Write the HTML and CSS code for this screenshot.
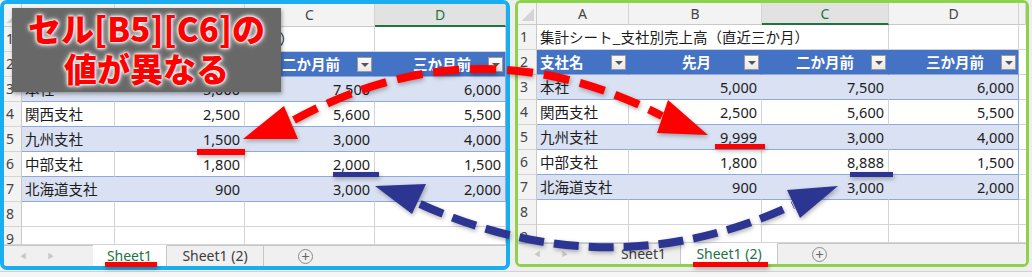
FILE: index.html
```html
<!DOCTYPE html>
<html lang="ja">
<head>
<meta charset="utf-8">
<title>シート比較</title>
<link rel="stylesheet" href="styles.css">
</head>
<body>
<div class="page">
  <div class="win win--l">
    <div class="grid grid--l">
      <div class="corner"></div><div class="ch">A</div><div class="ch">B</div><div class="ch">C</div><div class="ch ch--sel">D</div>
      <div class="rh">1</div><div class="c c--title">集計シート_支社別売上高（直近三か月）</div><div class="c"></div>
      <div class="rh">2</div><div class="c th th--a"><span>支社名</span><i class="fb"></i></div><div class="c th th--b"><span>先月</span><i class="fb"></i></div><div class="c th"><span>二か月前</span><i class="fb"></i></div><div class="c th th--last"><span>三か月前</span><i class="fb"></i></div>
      <div class="rh">3</div><div class="c t band">本社</div><div class="c t band n">5,000</div><div class="c t band n">7,500</div><div class="c t band n last">6,000</div>
      <div class="rh">4</div><div class="c t">関西支社</div><div class="c t n">2,500</div><div class="c t n">5,600</div><div class="c t n last">5,500</div>
      <div class="rh">5</div><div class="c t band">九州支社</div><div class="c t band n">1,500</div><div class="c t band n">3,000</div><div class="c t band n last">4,000</div>
      <div class="rh">6</div><div class="c t">中部支社</div><div class="c t n">1,800</div><div class="c t n">2,000</div><div class="c t n last">1,500</div>
      <div class="rh">7</div><div class="c t band">北海道支社</div><div class="c t band n">900</div><div class="c t band n">3,000</div><div class="c t band n last">2,000</div>
      <div class="rh">8</div><div class="c"></div><div class="c"></div><div class="c"></div><div class="c"></div>
      <div class="rh">9</div><div class="c"></div><div class="c"></div><div class="c"></div><div class="c"></div>
    </div>
    <div class="tabs">
      <div class="tabs__nav"><span>◀</span><span>▶</span></div>
      <div class="tab tab--active">Sheet1</div>
      <div class="tab tab--wide">Sheet1 (2)</div>
      <div class="tabs__rest"><span class="plus">+</span></div>
    </div>
  </div>

  <div class="win win--r">
    <div class="grid grid--r">
      <div class="corner"></div><div class="ch">A</div><div class="ch">B</div><div class="ch ch--sel">C</div><div class="ch">D</div><div class="ch"></div>
      <div class="rh">1</div><div class="c c--title">集計シート_支社別売上高（直近三か月）</div><div class="c"></div><div class="c"></div>
      <div class="rh">2</div><div class="c th th--a"><span>支社名</span><i class="fb"></i></div><div class="c th th--b"><span>先月</span><i class="fb"></i></div><div class="c th"><span>二か月前</span><i class="fb"></i></div><div class="c th th--last"><span>三か月前</span><i class="fb"></i></div><div class="c"></div>
      <div class="rh">3</div><div class="c t band">本社</div><div class="c t band n">5,000</div><div class="c t band n">7,500</div><div class="c t band n last">6,000</div><div class="c"></div>
      <div class="rh">4</div><div class="c t">関西支社</div><div class="c t n">2,500</div><div class="c t n">5,600</div><div class="c t n last">5,500</div><div class="c"></div>
      <div class="rh">5</div><div class="c t band">九州支社</div><div class="c t band n">9,999</div><div class="c t band n">3,000</div><div class="c t band n last">4,000</div><div class="c"></div>
      <div class="rh">6</div><div class="c t">中部支社</div><div class="c t n">1,800</div><div class="c t n">8,888</div><div class="c t n last">1,500</div><div class="c"></div>
      <div class="rh">7</div><div class="c t band">北海道支社</div><div class="c t band n">900</div><div class="c t band n">3,000</div><div class="c t band n last">2,000</div><div class="c"></div>
      <div class="rh">8</div><div class="c"></div><div class="c"></div><div class="c"></div><div class="c"></div><div class="c"></div>
      <div class="rh">9</div><div class="c"></div><div class="c"></div><div class="c"></div><div class="c"></div><div class="c"></div>
    </div>
    <div class="tabs">
      <div class="tabs__nav"><span>◀</span><span>▶</span></div>
      <div class="tab">Sheet1</div>
      <div class="tab tab--wide tab--active">Sheet1 (2)</div>
      <div class="tabs__rest"><span class="plus">+</span></div>
    </div>
  </div>

  <div class="label">セル[B5][C6]の<br>値が異なる</div>

  <svg class="arrows" width="1032" height="277" viewBox="0 0 1032 277">
    <g class="arrows__red">
      <path d="M 294 120 Q 478 20 662 116" fill="none" stroke="#ff0000" stroke-width="8" stroke-dasharray="26 11"/>
      <polygon points="243,139 284,106 298,139" fill="#ff0000"/>
      <polygon points="708,135 668,100 657,133" fill="#ff0000"/>
      <rect x="197" y="149" width="48" height="6" fill="#ff0000"/>
      <rect x="105" y="262" width="52" height="5" fill="#ff0000"/>
      <rect x="715" y="144" width="50" height="5" fill="#ff0000"/>
      <rect x="693" y="262" width="75" height="5" fill="#ff0000"/>
    </g>
    <g class="arrows__blue">
      <path d="M 420 204 Q 610 290 793 205" fill="none" stroke="#2d3592" stroke-width="8" stroke-dasharray="25 10"/>
      <polygon points="375,186 426,184 412,214" fill="#2d3592"/>
      <polygon points="838,186 787,190 800,218" fill="#2d3592"/>
      <rect x="333" y="172" width="46" height="5" fill="#2d3592"/>
      <rect x="850" y="172" width="43" height="5" fill="#2d3592"/>
    </g>
  </svg>
</div>
</body>
</html>
```

FILE: styles.css
```css
* {
  box-sizing: border-box;
  margin: 0;
  padding: 0;
}

body {
  margin: 0;
  width: 1032px;
  height: 277px;
  overflow: hidden;
  background: #f0f0f0;
  font-family: "Noto Sans CJK JP", "Noto Sans", sans-serif;
}

.page {
  position: relative;
  width: 1032px;
  height: 277px;
  display: flex;
  gap: 5px;
  align-items: flex-start;
  background: linear-gradient(to bottom, #eeeeee 0 271px, #d2d2d2 271px 272px, #f6f6f6 272px);
}

.win {
  background: #fff;
  display: flex;
  flex-direction: column;
  overflow: hidden;
}

.win--l {
  width: 510px;
  height: 270px;
  border: 4px solid #18aef0;
  border-radius: 7px;
}

.win--r {
  width: 514px;
  height: 267px;
  border: 3px solid #8ed14a;
  border-radius: 6px;
}

.grid {
  display: grid;
  font-size: 14.5px;
  color: #1c1c1c;
  flex: none;
}

.grid--l {
  grid-template-columns: 18px 93px 130px 130px 131px;
  grid-template-rows: 23px repeat(8, 25px) 18px;
}

.grid--r {
  grid-template-columns: 19px 92px 133px 127px 130px 7px;
  grid-template-rows: 22px repeat(8, 25px) 18px;
}

.corner {
  background: linear-gradient(135deg, transparent 50%, #d4d4d4 50%) no-repeat right 2px bottom 3px / 12px 12px, #f3f3f3;
  border-right: 1px solid #c9c9c9;
  border-bottom: 1px solid #c9c9c9;
}

.ch {
  background: #f3f3f3;
  border-right: 1px solid #d4d4d4;
  border-bottom: 1px solid #c9c9c9;
  color: #444;
  font-family: "Noto Sans", sans-serif;
  font-size: 14px;
  text-align: center;
  line-height: 21px;
}

.ch--sel {
  background: #e2e2e2;
  border-bottom: 2px solid #217346;
  color: #217346;
}

.rh {
  background: #f3f3f3;
  border-right: 1px solid #c9c9c9;
  border-bottom: 1px solid #d4d4d4;
  color: #444;
  font-family: "Noto Sans", sans-serif;
  font-size: 14px;
  padding-left: 2px;
  line-height: 24px;
  overflow: hidden;
}

.c {
  border-right: 1px solid #d4d4d4;
  border-bottom: 1px solid #d4d4d4;
  line-height: 24px;
  padding: 0 4px 0 3px;
  white-space: nowrap;
  overflow: visible;
  min-width: 0;
}

.c--title {
  grid-column: span 3;
}

.t {
  border-bottom-color: #8ea9db;
}

.band {
  background: #d9e1f2;
  border-right-color: #d9e1f2;
}

.n {
  text-align: right;
  padding-right: 4px;
  font-family: "Noto Sans", sans-serif;
}

.last {
  border-right-color: #8ea9db;
}

.th {
  background: #4472c4;
  border-right-color: #4472c4;
  border-bottom-color: #8ea9db;
  color: #fff;
  font-weight: 700;
  display: flex;
  align-items: center;
  justify-content: flex-end;
  padding-right: 2px;
}

.th span {
  margin-right: 17px;
}

.th--a {
  justify-content: space-between;
  padding-left: 3px;
}

.th--a span {
  margin-right: 0;
}

.th--b span {
  margin-right: 33px;
}

.th--last {
  border-right-color: #8ea9db;
}

.fb {
  width: 15px;
  height: 15px;
  flex: none;
  background: linear-gradient(#fbfbfb, #e9e9e9);
  border: 1px solid #9a9a9a;
  position: relative;
}

.fb::after {
  content: "";
  position: absolute;
  left: 3px;
  top: 5px;
  border-left: 4px solid transparent;
  border-right: 4px solid transparent;
  border-top: 4px solid #555;
}

.tabs {
  display: flex;
  height: 21px;
  flex: none;
  background: #f0f0f0;
  font-family: "Noto Sans", sans-serif;
  font-size: 14px;
}

.tabs__nav {
  width: 89px;
  border-top: 1px solid #c6c6c6;
  display: flex;
  align-items: center;
  gap: 20px;
  padding-left: 15px;
  color: #c8c8c8;
  font-size: 8px;
}

.tab {
  width: 74px;
  border-top: 1px solid #c6c6c6;
  border-right: 1px solid #c6c6c6;
  text-align: center;
  line-height: 19px;
  color: #3c3c3c;
}

.tab--wide {
  width: 97px;
}

.tab--active {
  background: #fff;
  border-top-color: #fff;
  color: #217346;
}

.tabs__rest {
  flex: 1;
  border-top: 1px solid #c6c6c6;
  display: flex;
  align-items: center;
  padding-left: 34px;
}

.plus {
  width: 15px;
  height: 15px;
  border: 1px solid #8a8a8a;
  border-radius: 50%;
  display: flex;
  align-items: center;
  justify-content: center;
  font-size: 15px;
  line-height: 1;
  color: #666;
}

.label {
  position: absolute;
  left: 12px;
  top: 8px;
  width: 269px;
  height: 84px;
  background: #686868;
  box-shadow: 1px 2px 4px rgba(0, 0, 0, 0.35);
  color: #ff0000;
  font-family: "Noto Sans CJK JP", sans-serif;
  font-weight: 900;
  font-size: 33px;
  line-height: 40px;
  text-align: center;
  text-shadow: 0 0 2px #fff, 0 0 3px #fff, 0 0 4px #fff, 0 0 6px rgba(255, 255, 255, 0.8);
}

.arrows {
  position: absolute;
  left: 0;
  top: 0;
  pointer-events: none;
}

.arrows__red,
.arrows__blue {
  filter: drop-shadow(1px 2px 2px rgba(0, 0, 0, 0.3));
}
```
